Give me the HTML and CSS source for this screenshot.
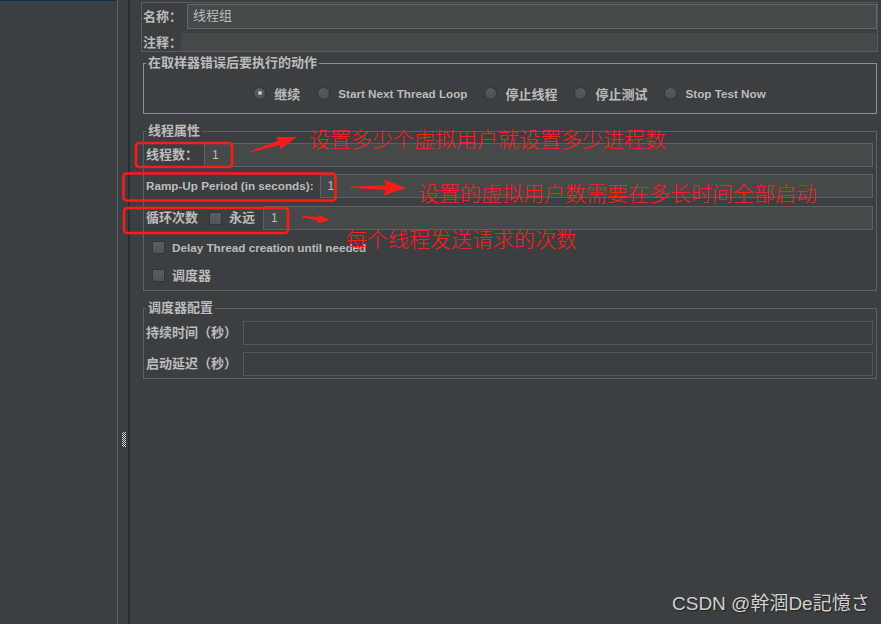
FILE: index.html
```html
<!DOCTYPE html>
<html>
	<head>
		<meta charset="utf-8">
		<link rel="stylesheet" href="styles.css">
	</head>
	<body>
		<div class="app">
			<div class="tree"></div>
			<div class="splitter"><span class="grip"></span></div>
			<div class="main">
				<div class="name-panel">
					<div class="name-row">
						<span class="lbl name-lbl">名称：</span>
						<div class="field name-field">线程组</div>
					</div>
					<div class="comment-row">
						<span class="lbl comment-lbl">注释：</span>
						<div class="comment-field"></div>
					</div>
				</div>

				<fieldset class="group action-group">
					<legend>在取样器错误后要执行的动作</legend>
					<div class="radios">
						<span class="radio-item"><span class="radio checked"></span>继续</span>
						<span class="radio-item en"><span class="radio"></span>Start Next Thread Loop</span>
						<span class="radio-item"><span class="radio"></span>停止线程</span>
						<span class="radio-item"><span class="radio"></span>停止测试</span>
						<span class="radio-item en"><span class="radio"></span>Stop Test Now</span>
					</div>
				</fieldset>

				<fieldset class="group thread-group">
					<legend>线程属性</legend>
					<div class="row">
						<span class="lbl">线程数：</span>
						<div class="field">1</div>
					</div>
					<div class="row ramp-row">
						<span class="lbl en">Ramp-Up Period (in seconds):</span>
						<div class="field">1</div>
					</div>
					<div class="row">
						<span class="lbl">循环次数</span>
						<span class="check loop-check"></span>
						<span class="lbl forever">永远</span>
						<div class="field">1</div>
					</div>
					<div class="row check-row">
						<span class="check"></span>
						<span class="lbl en">Delay Thread creation until needed</span>
					</div>
					<div class="row check-row">
						<span class="check"></span>
						<span class="lbl">调度器</span>
					</div>
				</fieldset>

				<fieldset class="group sched-group">
					<legend>调度器配置</legend>
					<div class="row">
						<span class="lbl">持续时间（秒）</span>
						<div class="field off"></div>
					</div>
					<div class="row">
						<span class="lbl">启动延迟（秒）</span>
						<div class="field off"></div>
					</div>
				</fieldset>
			</div>
		</div>

		<svg class="marks" width="881" height="624" viewBox="0 0 881 624">
			<rect x="136" y="143" width="96" height="24" rx="3" />
			<rect x="123.5" y="173.5" width="212" height="27" rx="3" />
			<rect x="124" y="208" width="164" height="25" rx="3" />
			<polygon transform="translate(250 152) rotate(-17.7)" points="0,-0.6 31,-2.2 29,-6.5 49,0 29,6.5 31,2.2 0,0.6" />
			<polygon transform="translate(350 187) rotate(1)" points="0,-0.6 36,-2.5 34,-8 56,0 34,8 36,2.5 0,0.6" />
			<polygon transform="translate(302 216.5) rotate(8)" points="0,-0.5 17,-1.8 16,-4.5 28,0 16,4.5 17,1.8 0,0.5" />
		</svg>
		<div class="note note1">设置多少个虚拟用户就设置多少进程数</div>
		<div class="note note2">设置的虚拟用户数需要在多长时间全部启动</div>
		<div class="note note3">每个线程发送请求的次数</div>

		<div class="watermark">CSDN @幹涸De記憶さ</div>
	</body>
</html>
```

FILE: styles.css
```css
html, body {
	margin: 0;
	height: 100%;
}
body {
	background-color: #3c3f41;
	color: #bbbbbb;
	font-family: "Liberation Sans", "Noto Sans CJK SC", sans-serif;
	font-size: 13px;
	overflow: hidden;
}
.app {
	display: flex;
	height: 624px;
}
.tree {
	width: 117px;
	border-top: 1px solid #12304c;
}
.splitter {
	width: 10px;
	border-left: 1px solid #5e6163;
	border-right: 2px solid #2b2d2f;
	display: flex;
	flex-direction: column;
}
.grip {
	width: 4px;
	height: 15px;
	margin: 432px 0 0 4px;
	background: repeating-conic-gradient(#d8d8d8 0 25%, #2b2b2b 0 50%) 0 0 / 2px 2px;
}
.main {
	flex: 1;
	padding: 0 3px 0 11px;
}

/* name / comment */
.name-panel {
	margin-top: 2px;
	border: 1px solid #5b5e60;
	border-right-color: #55585a;
	padding: 1px 0 0 1px;
}
.name-row, .comment-row, .row {
	display: flex;
	align-items: center;
}
.name-row {
	height: 25px;
}
.comment-row {
	height: 18px;
	margin-top: 4px;
}
.lbl {
	font-weight: bold;
	white-space: nowrap;
	line-height: 16px;
}
.en {
	font-size: 11.7px;
}
.name-lbl {
	width: 44px;
}
.comment-lbl {
	width: 38px;
	padding-top: 2px;
}
.field {
	flex: 1;
	box-sizing: border-box;
	height: 24px;
	line-height: 22px;
	padding-left: 7px;
	background-color: #45494a;
	border: 1px solid #5e6163;
	font-size: 12px;
	margin-left: 6px;
}
.field.off {
	background-color: transparent;
	border-color: #56595b;
}
.name-field {
	height: 25px;
	margin-left: 0;
	padding-left: 5px;
	font-size: 13px;
	border-color: #646769;
}
.comment-field {
	flex: 1;
	height: 18px;
	background-color: #45494a;
}

/* titled groups */
.group {
	margin: 3px 1px 0 2px;
	padding: 0 3px 0 2px;
	border: 1px solid #5e6163;
	min-width: 0;
}
.group legend {
	padding: 0 2px;
	font-weight: bold;
	line-height: 16px;
}
.action-group {
	border-color: #8f8f8f;
	padding-top: 14px;
	padding-bottom: 12px;
}
.thread-group {
	margin-top: 9px;
	padding-top: 4px;
	padding-bottom: 4px;
}
.sched-group {
	margin-top: 9px;
	padding-top: 5px;
	padding-bottom: 2px;
}
.radios {
	display: flex;
	justify-content: center;
	gap: 17px;
	height: 16px;
	align-items: center;
	font-weight: bold;
}
.radio-item {
	display: flex;
	align-items: center;
	gap: 8px;
	white-space: nowrap;
}
.radio {
	width: 13px;
	height: 13px;
	box-sizing: border-box;
	border-radius: 50%;
	background: linear-gradient(#585c5f, #4b4f51);
	border: 1px solid #323537;
	display: flex;
	align-items: center;
	justify-content: center;
}
.radio.checked::after {
	content: "";
	width: 4px;
	height: 4px;
	border-radius: 50%;
	background-color: #c8c8c8;
}
.row {
	height: 24px;
	margin-bottom: 7px;
}
.ramp-row {
	margin-bottom: 8px;
}
.row:last-child {
	margin-bottom: 0;
}
.check-row {
	height: 21px;
	padding-left: 6px;
	gap: 7px;
}
.check {
	width: 13px;
	height: 13px;
	box-sizing: border-box;
	border-radius: 2px;
	background: linear-gradient(#5a5e60, #505456);
	border: 1px solid #323537;
	flex: none;
}
.loop-check {
	margin-left: 11px;
	margin-right: 7px;
}
.forever + .field {
	margin-left: 8px;
}

/* annotations drawn over the screenshot */
.marks {
	position: absolute;
	top: 0;
	left: 0;
	pointer-events: none;
}
.marks rect {
	fill: none;
	stroke: #ff1a1a;
	stroke-width: 2.5;
}
.marks polygon {
	fill: #ff1a1a;
}
.note {
	position: absolute;
	color: #ff1c1c;
	font-family: "Noto Sans CJK SC", sans-serif;
	font-weight: 300;
	font-size: 21px;
	line-height: 24px;
	white-space: nowrap;
}
.note1 {
	left: 309px;
	top: 126px;
}
.note2 {
	left: 418px;
	top: 180px;
}
.note3 {
	left: 346px;
	top: 226px;
}
.watermark {
	position: absolute;
	left: 672px;
	top: 592px;
	font-family: "Liberation Sans", "Noto Sans CJK JP", sans-serif;
	font-size: 19px;
	line-height: 24px;
	color: #d0d0d0;
	text-shadow: 1px 1px 1px #1e1e1e;
	white-space: nowrap;
}
```
